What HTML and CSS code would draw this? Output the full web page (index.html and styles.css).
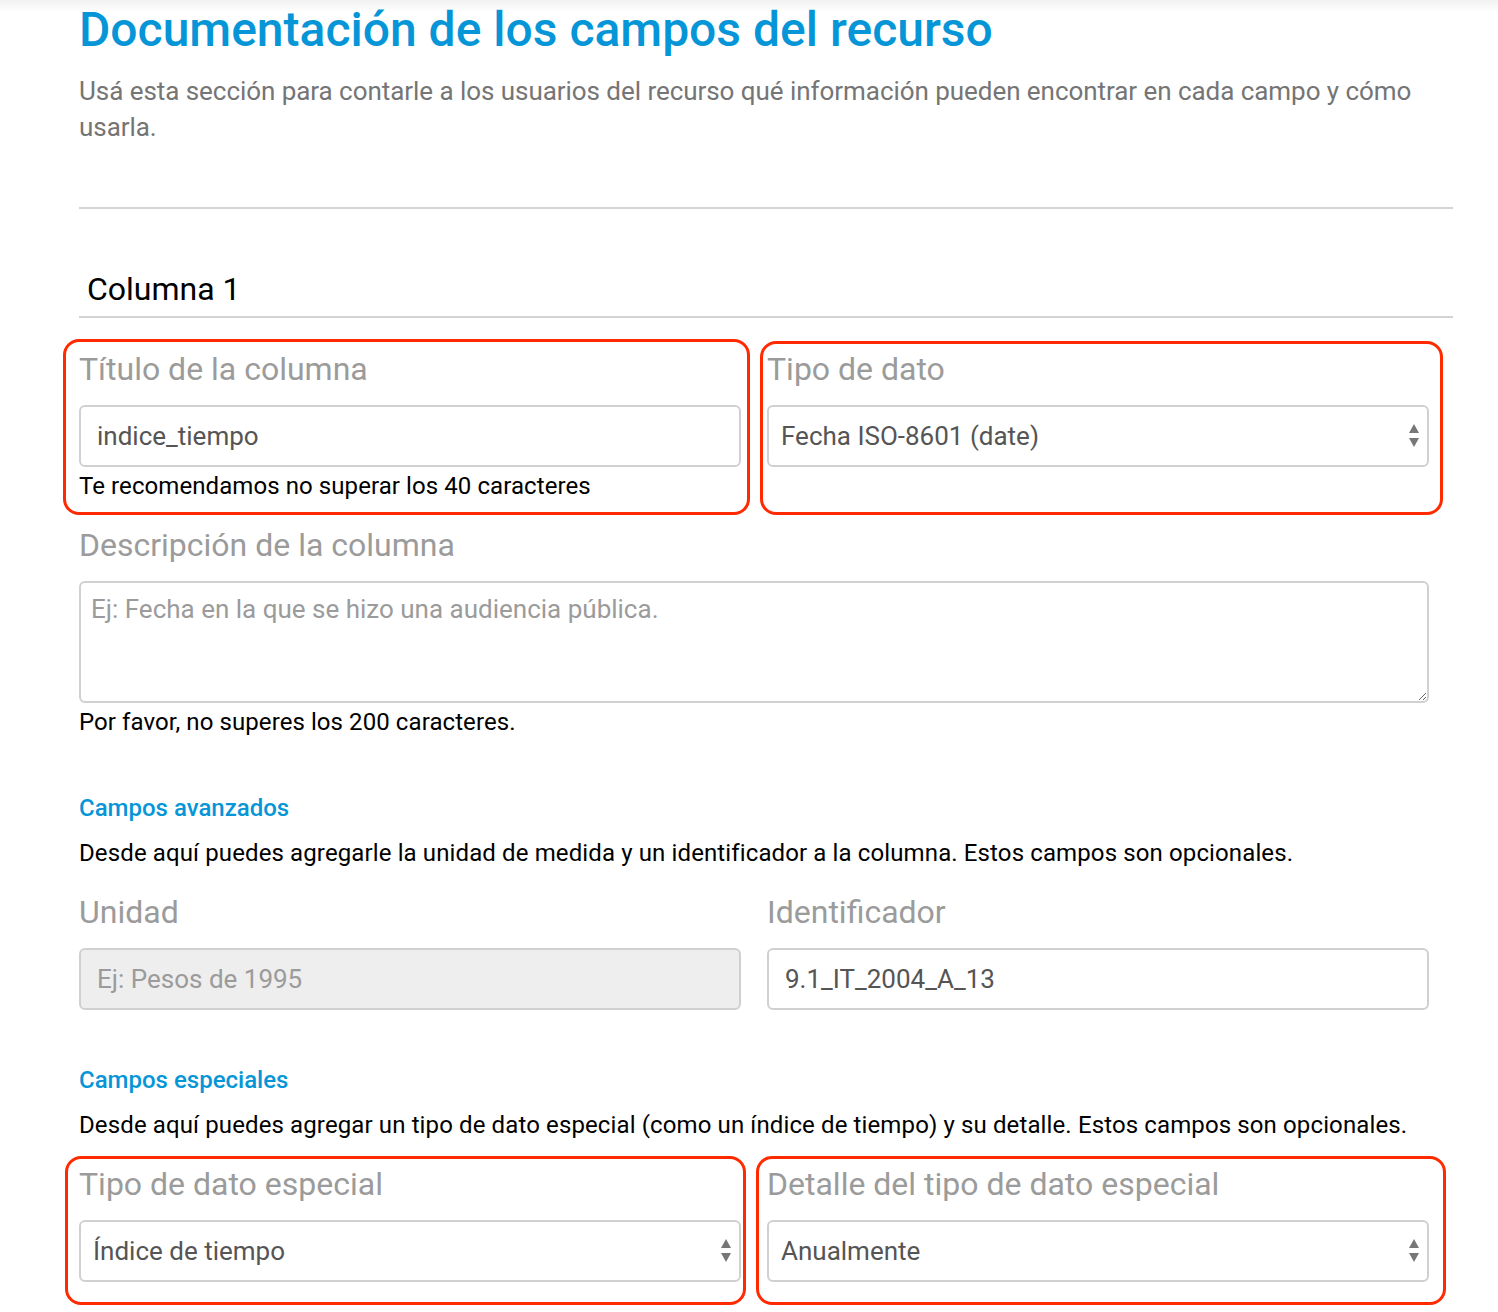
FILE: index.html
```html
<!DOCTYPE html>
<html lang="es">
<head>
<meta charset="utf-8">
<title>Documentación de los campos del recurso</title>
<link rel="stylesheet" href="styles.css">
</head>
<body>
<main class="page">
  <h1 class="title">Documentación de los campos del recurso</h1>
  <p class="lead">Usá esta sección para contarle a los usuarios del recurso qué información pueden encontrar en cada campo y cómo usarla.</p>
  <hr class="divider">

  <h2 class="col-heading">Columna 1</h2>

  <div class="form">
    <div class="row">
      <div class="field mark mark-tl">
        <label class="label">Título de la columna</label>
        <input class="control" type="text" value="indice_tiempo">
        <p class="help">Te recomendamos no superar los 40 caracteres</p>
      </div>
      <div class="field mark mark-tr">
        <label class="label">Tipo de dato</label>
        <div class="select-wrap">
          <select class="control select"><option>Fecha ISO-8601 (date)</option></select>
          <svg class="arrows" width="12" height="26" viewBox="0 0 12 26"><path d="M6 1 L11 10 L1 10 Z M1 15 L11 15 L6 24 Z" fill="#777"/></svg>
        </div>
      </div>
    </div>

    <div class="field">
      <label class="label">Descripción de la columna</label>
      <textarea class="control area" placeholder="Ej: Fecha en la que se hizo una audiencia pública."></textarea>
      <p class="help">Por favor, no superes los 200 caracteres.</p>
    </div>

    <section class="block">
      <h3 class="block-title">Campos avanzados</h3>
      <p class="block-desc">Desde aquí puedes agregarle la unidad de medida y un identificador a la columna. Estos campos son opcionales.</p>
      <div class="row">
        <div class="field">
          <label class="label">Unidad</label>
          <input class="control" type="text" placeholder="Ej: Pesos de 1995" disabled>
        </div>
        <div class="field">
          <label class="label">Identificador</label>
          <input class="control" type="text" value="9.1_IT_2004_A_13">
        </div>
      </div>
    </section>

    <section class="block">
      <h3 class="block-title">Campos especiales</h3>
      <p class="block-desc">Desde aquí puedes agregar un tipo de dato especial (como un índice de tiempo) y su detalle. Estos campos son opcionales.</p>
      <div class="row">
        <div class="field mark mark-bl">
          <label class="label">Tipo de dato especial</label>
          <div class="select-wrap">
            <select class="control select"><option>Índice de tiempo</option></select>
            <svg class="arrows" width="12" height="26" viewBox="0 0 12 26"><path d="M6 1 L11 10 L1 10 Z M1 15 L11 15 L6 24 Z" fill="#777"/></svg>
          </div>
        </div>
        <div class="field mark mark-br">
          <label class="label">Detalle del tipo de dato especial</label>
          <div class="select-wrap">
            <select class="control select"><option>Anualmente</option></select>
            <svg class="arrows" width="12" height="26" viewBox="0 0 12 26"><path d="M6 1 L11 10 L1 10 Z M1 15 L11 15 L6 24 Z" fill="#777"/></svg>
          </div>
        </div>
      </div>
    </section>
  </div>
</main>
</body>
</html>
```

FILE: styles.css
```css
* { box-sizing: border-box; }

html, body {
  margin: 0;
  padding: 0;
}

body {
  font-family: Roboto, "Liberation Sans", Arial, sans-serif;
  color: #111;
  background: #fff linear-gradient(to bottom, #f1f1f1 0, #ffffff 12px) no-repeat;
  width: 1498px;
  min-height: 1312px;
}

.page {
  padding: 0 45px 0 79px;
}

.title {
  margin: 0;
  font-size: 48px;
  line-height: 60px;
  font-weight: 500;
  color: #0696d7;
}

.lead {
  margin: 13px 0 0;
  font-size: 26px;
  line-height: 36px;
  color: #757575;
  padding-right: 20px;
  letter-spacing: -0.05px;
}

.divider {
  margin: 62px 0 0;
  border: 0;
  border-top: 2px solid #d4d4d4;
}

.col-heading {
  margin: 60px 0 0;
  padding: 0 0 7px 8px;
  font-size: 32px;
  line-height: 40px;
  font-weight: 400;
  color: #000;
  border-bottom: 2px solid #d4d4d4;
}

.form {
  padding-right: 24px;
  padding-top: 31px;
}

.row {
  display: grid;
  grid-template-columns: 1fr 1fr;
  column-gap: 26px;
}

.field {
  position: relative;
  margin-bottom: 24px;
}

.label {
  display: block;
  font-size: 32px;
  line-height: 40px;
  color: #9b9b9b;
  margin-bottom: 16px;
}

.control {
  display: block;
  width: 100%;
  height: 62px;
  margin: 0;
  padding: 0 16px;
  font-family: Roboto, "Liberation Sans", Arial, sans-serif;
  font-size: 26px;
  color: #555;
  background: #fff;
  border: 2px solid #d0d0d0;
  border-radius: 6px;
  outline: none;
}

.control::placeholder { color: #9b9b9b; }

.control:disabled {
  background: #eeeeee;
  color: #9b9b9b;
}

.select-wrap { position: relative; }

.select {
  -webkit-appearance: none;
  appearance: none;
  padding-left: 12px;
}

.arrows {
  position: absolute;
  right: 9px;
  top: 18px;
  pointer-events: none;
}

.area {
  height: 122px;
  padding: 10px 10px;
  line-height: 32px;
  resize: vertical;
}

.help {
  margin: 4px 0 0;
  font-size: 24px;
  line-height: 30px;
  color: #000;
  letter-spacing: 0.08px;
}

.block {
  margin-top: 55px;
}

.block-title {
  margin: 0;
  font-size: 24px;
  line-height: 32px;
  font-weight: 500;
  color: #0696d7;
}

.block-desc {
  margin: 14px 0 24px;
  font-size: 24px;
  line-height: 30px;
  color: #000;
  letter-spacing: 0.12px;
}

.block .field { margin-bottom: 0; }
.block + .block { margin-top: 54px; }

/* red annotation frames drawn over the fields */
.mark::before {
  content: "";
  position: absolute;
  border: 3.5px solid #ff2a00;
  border-radius: 16px;
  pointer-events: none;
}

.mark-tl::before { left: -16px; right: -9px; top: -10px; bottom: -14px; }
.mark-tr::before { left: -7px; right: -14px; top: -8px; bottom: -14px; }
.mark-bl::before { left: -14px; right: -5px; top: -8px; bottom: -23px; }
.mark-br::before { left: -11px; right: -17px; top: -8px; bottom: -23px; }
```
